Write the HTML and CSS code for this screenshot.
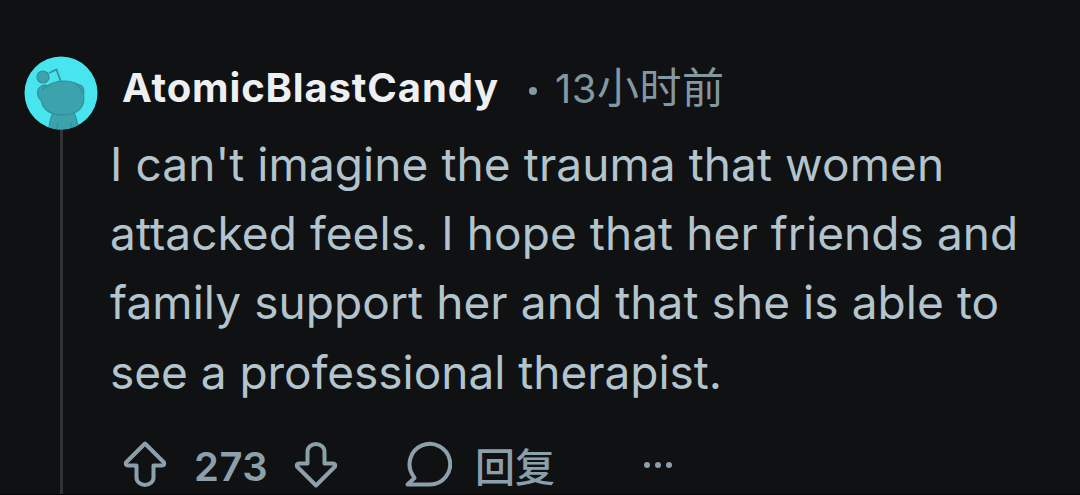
FILE: index.html
```html
<!DOCTYPE html>
<html lang="zh-CN">
<head>
    <meta charset="UTF-8">
    <meta name="viewport" content="width=device-width, initial-scale=1.0">
    <title>AtomicBlastCandy</title>
    <link rel="stylesheet" href="styles.css">
</head>
<body>
    <article class="comment">
        <div class="comment-rail">
            <svg class="avatar" viewBox="0 0 74 74">
                <defs>
                    <clipPath id="avatarClip"><circle cx="37" cy="37" r="36.5"/></clipPath>
                </defs>
                <circle cx="37" cy="37" r="36.5" fill="#48e5ef"/>
                <g clip-path="url(#avatarClip)" fill="#3ca2ac" stroke="#31909b" stroke-width="1.2">
                    <path d="M29 57 Q25 64 25 76 H54 Q54 64 50 57 Z"/>
                    <path d="M34 66 Q33 70 33 76 M47 66 Q48 70 47 76" fill="none"/>
                    <path d="M37 26 L32.5 13.5 L25 17" fill="none" stroke-width="1.8"/>
                    <circle cx="19" cy="21" r="6"/>
                    <path d="M24 29.5 C29 26 34 25 40 25 C46 25 51 26.5 54.5 28.5 C59 29 61 34 59.5 39 C61.5 50 55 58.5 40 59 C27 59 18.500 54 17.5 45 C12 40 12.5 33 17 30.500 C19 29 22 29 24 29.500 Z"/>
                    <path d="M18 34 Q21 31 25 29 M52 28 Q57 32 58.5 37" fill="none"/>
                </g>
            </svg>
            <div class="thread-line"></div>
        </div>
        <div class="comment-main">
            <header class="comment-header">
                <span class="author">AtomicBlastCandy</span>
                <span class="dot"></span>
                <span class="time">13<span class="time-unit">小时前</span></span>
            </header>
            <p class="comment-text">
                <span class="line">I can't imagine the trauma that women</span>
                <span class="line">attacked feels. I hope that her friends and</span>
                <span class="line">family support her and that she is able to</span>
                <span class="line line-last">see a professional therapist.</span>
            </p>
            <footer class="actions">
                <svg class="icon vote-icon" viewBox="0 0 44 48">
                    <path d="M22 3.5 L41 22.5 Q42 25.5 39 25.5 H30.5 V37.500 A8.5 7.5 0 0 1 13.5 37.500 V25.5 H5 Q2 25.5 3 22.5 Z"/>
                </svg>
                <span class="score">273</span>
                <svg class="icon vote-icon vote-down" viewBox="0 0 44 48">
                    <path d="M22 3.5 L41 22.5 Q42 25.5 39 25.5 H30.5 V37.500 A8.5 7.5 0 0 1 13.5 37.500 V25.5 H5 Q2 25.5 3 22.5 Z"/>
                </svg>
                <svg class="icon reply-icon" viewBox="0 0 48 48">
                    <path d="M3.5 43.500 L10.5 37 L9 34.500 A20.300 20.300 0 1 1 26 43.500 Z"/>
                </svg>
                <span class="reply">回复</span>
                <span class="more"><i></i><i></i><i></i></span>
            </footer>
        </div>
    </article>
</body>
</html>
```
FILE: styles.css
```css
:root {
    --bg: #0f1113;
    --text: #b3c4cc;
    --muted: #8298a2;
    --action: #8ba0aa;
    --author: #eeeff0;
    --line: #303234;
}

* {
    box-sizing: border-box;
}

body {
    margin: 0;
    height: 495px;
    overflow: hidden;
    background-color: var(--bg);
    border-bottom: 1px solid #040506;
    color: var(--text);
    font-family: Inter, "Noto Sans CJK SC", sans-serif;
}

.comment {
    display: flex;
    height: 100%;
    padding-top: 56px;
}

.comment-rail {
    display: flex;
    flex-direction: column;
    align-items: center;
    flex: none;
    width: 74px;
    margin-left: 24px;
}

.avatar {
    flex: none;
    width: 74px;
    height: 74px;
}

.thread-line {
    flex: 1;
    width: 3px;
    background-color: var(--line);
}

.comment-main {
    flex: 1;
    padding-left: 12px;
}

.comment-header {
    display: flex;
    align-items: center;
    height: 74px;
    padding: 0 0 11px 12px;
    white-space: nowrap;
}

.author {
    width: 377px;
    color: var(--author);
    font-size: 40px;
    font-weight: 700;
    letter-spacing: 0.85px;
}

.dot {
    width: 8px;
    height: 8px;
    margin: 7px 18px 0 30px;
    border-radius: 50%;
    background-color: var(--muted);
}

.time {
    margin-top: 2px;
    color: var(--muted);
    font-size: 40px;
    line-height: 48px;
    letter-spacing: 0.5px;
}

.time-unit {
    font-size: 42px;
}

.comment-text {
    margin: 0;
    font-size: 46px;
    line-height: 69.2px;
    letter-spacing: 0.07px;
    white-space: nowrap;
}

.line {
    display: block;
}

.line-last {
    letter-spacing: -0.03px;
}

.actions {
    display: flex;
    align-items: center;
    height: 48px;
    margin-top: 34px;
    padding-left: 13px;
    color: var(--action);
}

.icon {
    flex: none;
    fill: none;
    stroke: currentColor;
    stroke-width: 4;
    stroke-linejoin: round;
}

.vote-icon {
    width: 44px;
    height: 48px;
    margin-bottom: 2px;
}

.vote-down {
    margin: 0;
    transform: rotate(180deg);
}

.score {
    width: 76px;
    margin: 3px 24px 0 27px;
    font-size: 40px;
    font-weight: 600;
    letter-spacing: 0.5px;
}

.reply-icon {
    width: 48px;
    height: 48px;
    margin-left: 66px;
}

.reply {
    margin-left: 23px;
    font-size: 40px;
    font-weight: 500;
}

.more {
    display: flex;
    gap: 5px;
    margin-left: 89px;
}

.more i {
    width: 6px;
    height: 6px;
    border-radius: 50%;
    background-color: currentColor;
}
```
